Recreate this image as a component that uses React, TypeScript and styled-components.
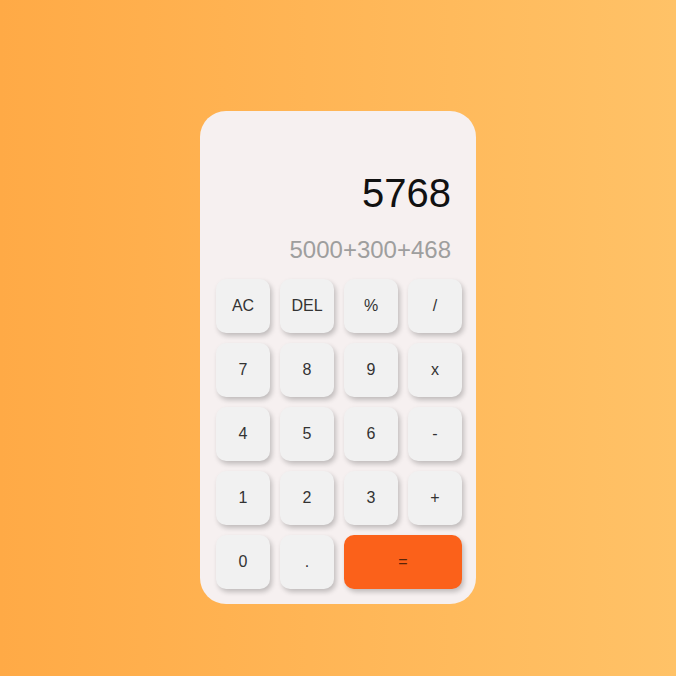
import React from "react";
import styled, { createGlobalStyle } from "styled-components";

const Global = createGlobalStyle`
  html, body { margin: 0; padding: 0; }
  body {
    width: 676px;
    height: 676px;
    overflow: hidden;
    font-family: "Liberation Sans", Arial, sans-serif;
  }
`;

const Page = styled.div`
  width: 676px;
  height: 676px;
  box-sizing: border-box;
  padding-top: 111px;
  display: flex;
  justify-content: center;
  align-items: flex-start;
  background: linear-gradient(to right, #ffaa46, #ffc267);
`;

const Card = styled.div`
  width: 276px;
  box-sizing: border-box;
  padding: 16px 15px 15px 16px;
  background: #f6f0f0;
  border-radius: 26px;
  display: flex;
  flex-direction: column;
`;

const Display = styled.div`
  padding: 42px 10px 0 0;
  margin-bottom: 14px;
  display: flex;
  flex-direction: column;
  align-items: flex-end;
`;

const Result = styled.div`
  font-size: 40px;
  line-height: 48px;
  color: #111;
`;

const Expression = styled.div`
  margin-top: 18px;
  font-size: 24px;
  line-height: 30px;
  color: #9e9e9e;
`;

const Keys = styled.div`
  display: grid;
  grid-template-columns: repeat(4, 54px);
  grid-auto-rows: 54px;
  gap: 10px;
`;

const Key = styled.button<{ $accent?: boolean; $wide?: boolean }>`
  grid-column: ${(p) => (p.$wide ? "span 2" : "auto")};
  border: none;
  border-radius: 10px;
  background: ${(p) => (p.$accent ? "#fb611a" : "#f1f1f1")};
  color: ${(p) => (p.$accent ? "#5a2408" : "#333")};
  font-family: "Liberation Sans", Arial, sans-serif;
  font-size: 16px;
  box-shadow: 2px 3px 5px rgba(0, 0, 0, 0.22);
  padding: 0;
  cursor: pointer;
`;

const keys: { label: string; accent?: boolean; wide?: boolean }[] = [
  { label: "AC" },
  { label: "DEL" },
  { label: "%" },
  { label: "/" },
  { label: "7" },
  { label: "8" },
  { label: "9" },
  { label: "x" },
  { label: "4" },
  { label: "5" },
  { label: "6" },
  { label: "-" },
  { label: "1" },
  { label: "2" },
  { label: "3" },
  { label: "+" },
  { label: "0" },
  { label: "." },
  { label: "=", accent: true, wide: true },
];

export default function App() {
  return (
    <>
      <Global />
      <Page>
        <Card>
          <Display>
            <Result>5768</Result>
            <Expression>5000+300+468</Expression>
          </Display>
          <Keys>
            {keys.map((k) => (
              <Key key={k.label} $accent={k.accent} $wide={k.wide}>
                {k.label}
              </Key>
            ))}
          </Keys>
        </Card>
      </Page>
    </>
  );
}
